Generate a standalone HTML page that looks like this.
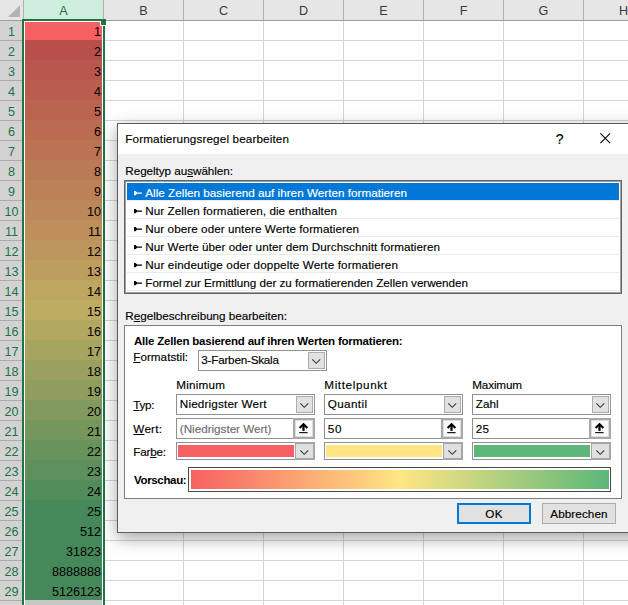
<!DOCTYPE html>
<html lang="de"><head><meta charset="utf-8"><title>Formatierungsregel bearbeiten</title>
<style>
*{box-sizing:border-box;margin:0;padding:0}
html,body{width:628px;height:605px;overflow:hidden;background:#fff}
body{position:relative;font-family:"Liberation Sans",sans-serif;font-size:11.7px;color:#000}
.a,.t,.ch,.rh,.cv,.cf,.box,.dd,.btn{position:absolute}
.t{white-space:nowrap;line-height:16px;height:16px;-webkit-text-stroke:0.15px}
.b{font-weight:bold;font-size:11.5px;-webkit-text-stroke:0}
.w{color:#fff}
.g{color:#6d6d6d}
u{text-decoration:underline;text-underline-offset:1px}
.ch{top:0;height:20px;background:#e6e6e6;color:#3a3a3a;text-align:center;font-size:12.6px;line-height:20px;padding-top:1px;border-right:1px solid #b0b0b0}
.rh{left:0;width:23px;height:19px;background:#d2d2d2;color:#217346;text-align:center;font-size:12.6px;line-height:19px;padding-top:2px}
.cf{left:23px;width:79px;height:20px}
.cv{left:24px;width:77px;height:20px;text-align:right;font-size:12.6px;line-height:20px;padding-top:2px;color:#000;white-space:nowrap}
.box{background:#fff;border:1px solid #8f9196}
.dd{background:#e1e1e1;border:1px solid #adadad}
.btn{background:#e1e1e1;border:1px solid #adadad}
svg{position:absolute;overflow:visible}
</style></head><body>
<div class="a" style="left:0;top:0;width:628px;height:605px;background:repeating-linear-gradient(to bottom,#d4d4d4 0,#d4d4d4 1px,transparent 1px,transparent 20px)"></div>
<div class="a" style="left:23px;top:0;width:605px;height:605px;background:repeating-linear-gradient(to right,#d4d4d4 0,#d4d4d4 1px,transparent 1px,transparent 80px)"></div>
<div class="a" style="left:0;top:0;width:628px;height:21px;background:#e6e6e6;border-bottom:1px solid #9e9e9e"></div>
<div class="ch" style="left:0;width:24px"><svg style="left:8px;top:5px" width="12" height="12"><polygon points="12,0 12,12 0,12" fill="#b4b4b4"/></svg></div>
<div class="ch" style="left:24px;width:80px;background:#cfeedd;color:#217346;">A</div>
<div class="ch" style="left:104px;width:80px;">B</div>
<div class="ch" style="left:184px;width:80px;">C</div>
<div class="ch" style="left:264px;width:80px;">D</div>
<div class="ch" style="left:344px;width:80px;">E</div>
<div class="ch" style="left:424px;width:80px;">F</div>
<div class="ch" style="left:504px;width:80px;">G</div>
<div class="ch" style="left:584px;width:80px;">H</div>
<div class="a" style="left:0;top:21px;width:24px;height:584px;background:#d2d2d2;border-right:1px solid #9e9e9e"></div>
<div class="rh" style="top:21px;border-bottom:0">1</div>
<div class="a" style="left:0;top:40px;width:23px;height:1px;background:#ababab"></div>
<div class="rh" style="top:41px;border-bottom:0">2</div>
<div class="a" style="left:0;top:60px;width:23px;height:1px;background:#ababab"></div>
<div class="rh" style="top:61px;border-bottom:0">3</div>
<div class="a" style="left:0;top:80px;width:23px;height:1px;background:#ababab"></div>
<div class="rh" style="top:81px;border-bottom:0">4</div>
<div class="a" style="left:0;top:100px;width:23px;height:1px;background:#ababab"></div>
<div class="rh" style="top:101px;border-bottom:0">5</div>
<div class="a" style="left:0;top:120px;width:23px;height:1px;background:#ababab"></div>
<div class="rh" style="top:121px;border-bottom:0">6</div>
<div class="a" style="left:0;top:140px;width:23px;height:1px;background:#ababab"></div>
<div class="rh" style="top:141px;border-bottom:0">7</div>
<div class="a" style="left:0;top:160px;width:23px;height:1px;background:#ababab"></div>
<div class="rh" style="top:161px;border-bottom:0">8</div>
<div class="a" style="left:0;top:180px;width:23px;height:1px;background:#ababab"></div>
<div class="rh" style="top:181px;border-bottom:0">9</div>
<div class="a" style="left:0;top:200px;width:23px;height:1px;background:#ababab"></div>
<div class="rh" style="top:201px;border-bottom:0">10</div>
<div class="a" style="left:0;top:220px;width:23px;height:1px;background:#ababab"></div>
<div class="rh" style="top:221px;border-bottom:0">11</div>
<div class="a" style="left:0;top:240px;width:23px;height:1px;background:#ababab"></div>
<div class="rh" style="top:241px;border-bottom:0">12</div>
<div class="a" style="left:0;top:260px;width:23px;height:1px;background:#ababab"></div>
<div class="rh" style="top:261px;border-bottom:0">13</div>
<div class="a" style="left:0;top:280px;width:23px;height:1px;background:#ababab"></div>
<div class="rh" style="top:281px;border-bottom:0">14</div>
<div class="a" style="left:0;top:300px;width:23px;height:1px;background:#ababab"></div>
<div class="rh" style="top:301px;border-bottom:0">15</div>
<div class="a" style="left:0;top:320px;width:23px;height:1px;background:#ababab"></div>
<div class="rh" style="top:321px;border-bottom:0">16</div>
<div class="a" style="left:0;top:340px;width:23px;height:1px;background:#ababab"></div>
<div class="rh" style="top:341px;border-bottom:0">17</div>
<div class="a" style="left:0;top:360px;width:23px;height:1px;background:#ababab"></div>
<div class="rh" style="top:361px;border-bottom:0">18</div>
<div class="a" style="left:0;top:380px;width:23px;height:1px;background:#ababab"></div>
<div class="rh" style="top:381px;border-bottom:0">19</div>
<div class="a" style="left:0;top:400px;width:23px;height:1px;background:#ababab"></div>
<div class="rh" style="top:401px;border-bottom:0">20</div>
<div class="a" style="left:0;top:420px;width:23px;height:1px;background:#ababab"></div>
<div class="rh" style="top:421px;border-bottom:0">21</div>
<div class="a" style="left:0;top:440px;width:23px;height:1px;background:#ababab"></div>
<div class="rh" style="top:441px;border-bottom:0">22</div>
<div class="a" style="left:0;top:460px;width:23px;height:1px;background:#ababab"></div>
<div class="rh" style="top:461px;border-bottom:0">23</div>
<div class="a" style="left:0;top:480px;width:23px;height:1px;background:#ababab"></div>
<div class="rh" style="top:481px;border-bottom:0">24</div>
<div class="a" style="left:0;top:500px;width:23px;height:1px;background:#ababab"></div>
<div class="rh" style="top:501px;border-bottom:0">25</div>
<div class="a" style="left:0;top:520px;width:23px;height:1px;background:#ababab"></div>
<div class="rh" style="top:521px;border-bottom:0">26</div>
<div class="a" style="left:0;top:540px;width:23px;height:1px;background:#ababab"></div>
<div class="rh" style="top:541px;border-bottom:0">27</div>
<div class="a" style="left:0;top:560px;width:23px;height:1px;background:#ababab"></div>
<div class="rh" style="top:561px;border-bottom:0">28</div>
<div class="a" style="left:0;top:580px;width:23px;height:1px;background:#ababab"></div>
<div class="rh" style="top:581px;border-bottom:0">29</div>
<div class="a" style="left:0;top:600px;width:23px;height:1px;background:#ababab"></div>
<div class="rh" style="top:601px;border-bottom:0">30</div>
<div class="a" style="left:0;top:620px;width:23px;height:1px;background:#ababab"></div>
<div class="cf" style="top:20px;background:#f76062"></div><div class="cv" style="top:20px">1</div>
<div class="cf" style="top:40px;background:#b94f4b"></div><div class="cv" style="top:40px">2</div>
<div class="cf" style="top:60px;background:#b9564d"></div><div class="cv" style="top:60px">3</div>
<div class="cf" style="top:80px;background:#ba5d4e"></div><div class="cv" style="top:80px">4</div>
<div class="cf" style="top:100px;background:#ba6450"></div><div class="cv" style="top:100px">5</div>
<div class="cf" style="top:120px;background:#bb6b52"></div><div class="cv" style="top:120px">6</div>
<div class="cf" style="top:140px;background:#bb7354"></div><div class="cv" style="top:140px">7</div>
<div class="cf" style="top:160px;background:#bb7a56"></div><div class="cv" style="top:160px">8</div>
<div class="cf" style="top:180px;background:#bc8157"></div><div class="cv" style="top:180px">9</div>
<div class="cf" style="top:200px;background:#bc8859"></div><div class="cv" style="top:200px">10</div>
<div class="cf" style="top:220px;background:#bd8f5b"></div><div class="cv" style="top:220px">11</div>
<div class="cf" style="top:240px;background:#bd965d"></div><div class="cv" style="top:240px">12</div>
<div class="cf" style="top:260px;background:#be9e5e"></div><div class="cv" style="top:260px">13</div>
<div class="cf" style="top:280px;background:#bea560"></div><div class="cv" style="top:280px">14</div>
<div class="cf" style="top:300px;background:#beac62"></div><div class="cv" style="top:300px">15</div>
<div class="cf" style="top:320px;background:#b2a861"></div><div class="cv" style="top:320px">16</div>
<div class="cf" style="top:340px;background:#a6a560"></div><div class="cv" style="top:340px">17</div>
<div class="cf" style="top:360px;background:#9aa160"></div><div class="cv" style="top:360px">18</div>
<div class="cf" style="top:380px;background:#8e9e5f"></div><div class="cv" style="top:380px">19</div>
<div class="cf" style="top:400px;background:#829a5e"></div><div class="cv" style="top:400px">20</div>
<div class="cf" style="top:420px;background:#75975d"></div><div class="cv" style="top:420px">21</div>
<div class="cf" style="top:440px;background:#69935d"></div><div class="cv" style="top:440px">22</div>
<div class="cf" style="top:460px;background:#5d905c"></div><div class="cv" style="top:460px">23</div>
<div class="cf" style="top:480px;background:#518c5b"></div><div class="cv" style="top:480px">24</div>
<div class="cf" style="top:500px;background:#45895a"></div><div class="cv" style="top:500px">25</div>
<div class="cf" style="top:520px;background:#45895a"></div><div class="cv" style="top:520px">512</div>
<div class="cf" style="top:540px;background:#45895a"></div><div class="cv" style="top:540px">31823</div>
<div class="cf" style="top:560px;background:#45895a"></div><div class="cv" style="top:560px">8888888</div>
<div class="cf" style="top:580px;background:#45895a"></div><div class="cv" style="top:580px">5126123</div>
<div class="cf" style="top:600px;background:#c6c6c6"></div>
<div class="a" style="left:22px;top:19px;width:83px;height:2px;background:#217346"></div>
<div class="a" style="left:22px;top:19px;width:2px;height:586px;background:#217346"></div>
<div class="a" style="left:103px;top:19px;width:2px;height:586px;background:#217346"></div>
<div class="a" style="left:24px;top:21px;width:78px;height:1px;background:#fff"></div>
<div class="a" style="left:24px;top:21px;width:1px;height:584px;background:#fff"></div>
<div class="a" style="left:102px;top:21px;width:1px;height:584px;background:#fff"></div>
<div class="a" style="left:100px;top:21px;width:6px;height:5px;background:#fff"></div>
<div class="a" style="left:101px;top:19px;width:5px;height:6px;background:#217346"></div>
<div class="a" style="left:117px;top:123px;width:540px;height:410px;background:#f0f0f0;border:1px solid #5c5c5c;box-shadow:0 5px 16px rgba(0,0,0,.36)"></div>
<div class="a" style="left:118px;top:124px;width:510px;height:30px;background:#fff"></div>
<span class="t " id="t0" style="left:125.3px;top:131px;letter-spacing:0.138px">Formatierungsregel bearbeiten</span>
<span class="t " id="t1" style="left:555.8px;top:130.5px;letter-spacing:0.000px"><span style="font-size:14px">?</span></span>
<svg style="left:600px;top:133px" width="11" height="11"><path d="M0.4 0.4L10.1 10.1M10.1 0.4L0.4 10.1" stroke="#000" stroke-width="1.1" fill="none"/></svg>
<span class="t " id="t2" style="left:125.3px;top:163px;letter-spacing:-0.046px">Regeltyp au<u>s</u>wählen:</span>
<div class="a" style="left:124px;top:180px;width:498px;height:114px;background:#fff;border:1px solid #646464"></div>
<div class="a" style="left:125px;top:181px;width:496px;height:112px;border:1px solid #a0a0a0"></div>
<div class="a" style="left:127px;top:183px;width:492px;height:17px;background:#0078d7"></div>
<div class="a" style="left:127px;top:200px;width:492px;height:1px;background:#eaeaea"></div>
<svg style="left:134px;top:191px" width="8" height="5"><path d="M0 0H1.4L3.2 1.45H8V2.8H3.2L1.4 4.3H0Z" fill="#fff"/></svg>
<span class="t w" id="t3" style="left:145.3px;top:184.5px;letter-spacing:0.015px">Alle Zellen basierend auf ihren Werten formatieren</span>
<div class="a" style="left:127px;top:218px;width:492px;height:1px;background:#eaeaea"></div>
<svg style="left:134px;top:209px" width="8" height="5"><path d="M0 0H1.4L3.2 1.45H8V2.8H3.2L1.4 4.3H0Z" fill="#000"/></svg>
<span class="t " id="t4" style="left:145.3px;top:202.5px;letter-spacing:0.055px">Nur Zellen formatieren, die enthalten</span>
<div class="a" style="left:127px;top:236px;width:492px;height:1px;background:#eaeaea"></div>
<svg style="left:134px;top:227px" width="8" height="5"><path d="M0 0H1.4L3.2 1.45H8V2.8H3.2L1.4 4.3H0Z" fill="#000"/></svg>
<span class="t " id="t5" style="left:145.3px;top:220.5px;letter-spacing:0.056px">Nur obere oder untere Werte formatieren</span>
<div class="a" style="left:127px;top:254px;width:492px;height:1px;background:#eaeaea"></div>
<svg style="left:134px;top:245px" width="8" height="5"><path d="M0 0H1.4L3.2 1.45H8V2.8H3.2L1.4 4.3H0Z" fill="#000"/></svg>
<span class="t " id="t6" style="left:145.3px;top:238.5px;letter-spacing:0.037px">Nur Werte über oder unter dem Durchschnitt formatieren</span>
<div class="a" style="left:127px;top:272px;width:492px;height:1px;background:#eaeaea"></div>
<svg style="left:134px;top:263px" width="8" height="5"><path d="M0 0H1.4L3.2 1.45H8V2.8H3.2L1.4 4.3H0Z" fill="#000"/></svg>
<span class="t " id="t7" style="left:145.3px;top:256.5px;letter-spacing:0.119px">Nur eindeutige oder doppelte Werte formatieren</span>
<div class="a" style="left:127px;top:290px;width:492px;height:1px;background:#eaeaea"></div>
<svg style="left:134px;top:281px" width="8" height="5"><path d="M0 0H1.4L3.2 1.45H8V2.8H3.2L1.4 4.3H0Z" fill="#000"/></svg>
<span class="t " id="t8" style="left:145.3px;top:274.5px;letter-spacing:-0.036px">Formel zur Ermittlung der zu formatierenden Zellen verwenden</span>
<span class="t " id="t9" style="left:125.3px;top:308px;letter-spacing:-0.028px">R<u>e</u>gelbeschreibung bearbeiten:</span>
<div class="box" style="left:124px;top:325px;width:498px;height:174px;border-color:#7b8086"></div>
<span class="t b" id="t10" style="left:134px;top:333px;letter-spacing:-0.207px">Alle Zellen basierend auf ihren Werten formatieren:</span>
<span class="t " id="t11" style="left:133.3px;top:349px;letter-spacing:0.014px"><u>F</u>ormatstil:</span>
<div class="box" style="left:198px;top:350px;width:129px;height:21px"></div>
<div class="dd" style="left:308px;top:352px;width:17px;height:17px"></div>
<svg style="left:311.5px;top:359.2px" width="9" height="5"><path d="M0.3 0.3L4.25 4.3L8.2 0.3" stroke="#3c3c3c" stroke-width="1.15" fill="none"/></svg>
<span class="t " id="t12" style="left:201.3px;top:352px;letter-spacing:-0.220px">3-Farben-Skala</span>
<span class="t " id="t13" style="left:176.3px;top:377px;letter-spacing:0.216px">Minimum</span>
<span class="t " id="t14" style="left:324.3px;top:377px;letter-spacing:0.618px">Mittelpunkt</span>
<span class="t " id="t15" style="left:472.3px;top:377px;letter-spacing:-0.159px">Maximum</span>
<span class="t " id="t16" style="left:133.3px;top:397px;letter-spacing:-0.298px"><u>T</u>yp:</span>
<span class="t " id="t17" style="left:133.3px;top:421px;letter-spacing:0.245px"><u>W</u>ert:</span>
<span class="t " id="t18" style="left:133.3px;top:444px;letter-spacing:-0.219px">Far<u>b</u>e:</span>
<div class="box" style="left:176px;top:394px;width:139px;height:21px"></div>
<div class="dd" style="left:296px;top:396px;width:17px;height:17px"></div>
<svg style="left:299.5px;top:403.2px" width="9" height="5"><path d="M0.3 0.3L4.25 4.3L8.2 0.3" stroke="#3c3c3c" stroke-width="1.15" fill="none"/></svg>
<span class="t " id="t19" style="left:179.8px;top:396px;letter-spacing:0.165px">Niedrigster Wert</span>
<div class="box" style="left:176px;top:418px;width:139px;height:21px"></div>
<div class="a" style="left:293px;top:418px;width:22px;height:21px;background:#fcfcfc;border:2px solid #a8a8a8;box-shadow:inset 0 0 0 1px #dedede"></div>
<svg style="left:298.8px;top:423.3px" width="9" height="11"><path d="M0.6 5L4.5 1.3L8.4 5" stroke="#000" stroke-width="2.2" fill="none"/><rect x="3.4" y="1.6" width="2.2" height="6.3" fill="#000"/><rect x="0.2" y="9.1" width="8.4" height="1.1" fill="#000"/></svg>
<span class="t g" id="t20" style="left:179.8px;top:420.5px;letter-spacing:-0.018px">(Niedrigster Wert)</span>
<div class="box" style="left:176px;top:442px;width:139px;height:18px"></div>
<div class="a" style="left:178px;top:445px;width:116px;height:12px;background:#f76062"></div>
<div class="a" style="left:295px;top:442px;width:20px;height:18px;background:#e0e0e0;border:2px solid #a6a6a6;border-left-width:1px"></div>
<svg style="left:299.5px;top:449.8px" width="9" height="5"><path d="M0.3 0.3L4.25 4.3L8.2 0.3" stroke="#3c3c3c" stroke-width="1.15" fill="none"/></svg>
<div class="box" style="left:324px;top:394px;width:139px;height:21px"></div>
<div class="dd" style="left:444px;top:396px;width:17px;height:17px"></div>
<svg style="left:447.5px;top:403.2px" width="9" height="5"><path d="M0.3 0.3L4.25 4.3L8.2 0.3" stroke="#3c3c3c" stroke-width="1.15" fill="none"/></svg>
<span class="t " id="t21" style="left:327.8px;top:396px;letter-spacing:0.359px">Quantil</span>
<div class="box" style="left:324px;top:418px;width:139px;height:21px"></div>
<div class="a" style="left:441px;top:418px;width:22px;height:21px;background:#fcfcfc;border:2px solid #a8a8a8;box-shadow:inset 0 0 0 1px #dedede"></div>
<svg style="left:446.8px;top:423.3px" width="9" height="11"><path d="M0.6 5L4.5 1.3L8.4 5" stroke="#000" stroke-width="2.2" fill="none"/><rect x="3.4" y="1.6" width="2.2" height="6.3" fill="#000"/><rect x="0.2" y="9.1" width="8.4" height="1.1" fill="#000"/></svg>
<span class="t " id="t22" style="left:327.8px;top:420.5px;letter-spacing:0.684px">50</span>
<div class="box" style="left:324px;top:442px;width:139px;height:18px"></div>
<div class="a" style="left:326px;top:445px;width:116px;height:12px;background:#ffe683"></div>
<div class="a" style="left:443px;top:442px;width:20px;height:18px;background:#e0e0e0;border:2px solid #a6a6a6;border-left-width:1px"></div>
<svg style="left:447.5px;top:449.8px" width="9" height="5"><path d="M0.3 0.3L4.25 4.3L8.2 0.3" stroke="#3c3c3c" stroke-width="1.15" fill="none"/></svg>
<div class="box" style="left:472px;top:394px;width:139px;height:21px"></div>
<div class="dd" style="left:592px;top:396px;width:17px;height:17px"></div>
<svg style="left:595.5px;top:403.2px" width="9" height="5"><path d="M0.3 0.3L4.25 4.3L8.2 0.3" stroke="#3c3c3c" stroke-width="1.15" fill="none"/></svg>
<span class="t " id="t23" style="left:475.8px;top:396px;letter-spacing:-0.017px">Zahl</span>
<div class="box" style="left:472px;top:418px;width:139px;height:21px"></div>
<div class="a" style="left:589px;top:418px;width:22px;height:21px;background:#fcfcfc;border:2px solid #a8a8a8;box-shadow:inset 0 0 0 1px #dedede"></div>
<svg style="left:594.8px;top:423.3px" width="9" height="11"><path d="M0.6 5L4.5 1.3L8.4 5" stroke="#000" stroke-width="2.2" fill="none"/><rect x="3.4" y="1.6" width="2.2" height="6.3" fill="#000"/><rect x="0.2" y="9.1" width="8.4" height="1.1" fill="#000"/></svg>
<span class="t " id="t24" style="left:475.8px;top:420.5px;letter-spacing:0.184px">25</span>
<div class="box" style="left:472px;top:442px;width:139px;height:18px"></div>
<div class="a" style="left:474px;top:445px;width:116px;height:12px;background:#5cb779"></div>
<div class="a" style="left:591px;top:442px;width:20px;height:18px;background:#e0e0e0;border:2px solid #a6a6a6;border-left-width:1px"></div>
<svg style="left:595.5px;top:449.8px" width="9" height="5"><path d="M0.3 0.3L4.25 4.3L8.2 0.3" stroke="#3c3c3c" stroke-width="1.15" fill="none"/></svg>
<span class="t b" id="t25" style="left:134px;top:472px;letter-spacing:-0.336px">Vorschau:</span>
<div class="box" style="left:188px;top:467px;width:423px;height:25px;border-color:#4a4a4a"></div>
<div class="a" style="left:191px;top:470px;width:418px;height:19px;background:linear-gradient(to right,#f76062 0%,#ffe683 50%,#5cb779 100%)"></div>
<div class="btn" style="left:457px;top:503px;width:74px;height:21px;border:2px solid #0078d7"></div>
<span class="t " id="t26" style="left:485.3px;top:506px;letter-spacing:0.309px">OK</span>
<div class="btn" style="left:542px;top:503px;width:74px;height:21px"></div>
<span class="t " id="t27" style="left:550.3px;top:506px;letter-spacing:0.082px">Abbrechen</span>
</body></html>
